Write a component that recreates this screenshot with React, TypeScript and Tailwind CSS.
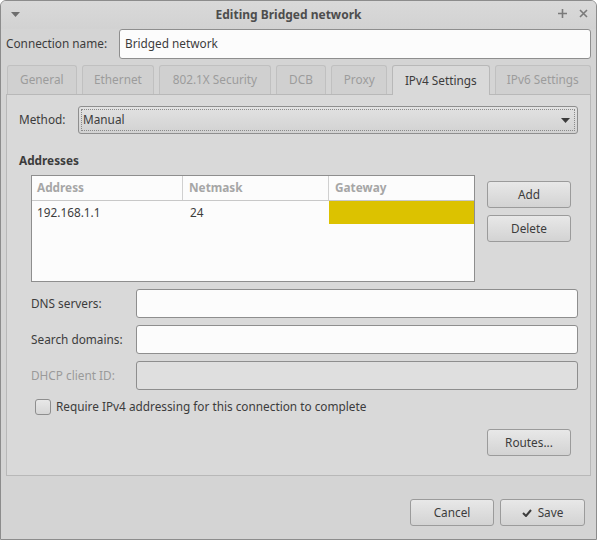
import React from 'react';

const Btn = ({ children, className = '' }: { children: React.ReactNode; className?: string }) => (
  <button
    className={`h-[27px] w-[84px] rounded-[3px] border border-[#9b9b9b] bg-gradient-to-b from-[#e8e8e8] to-[#d3d3d3] text-[#3c3c3c] flex items-center justify-center gap-[6px] ${className}`}
  >
    {children}
  </button>
);

const Field = ({ label, disabled = false }: { label: string; disabled?: boolean }) => (
  <div className="flex items-center h-[29px]">
    <span className={`w-[105px] ${disabled ? 'text-[#9a9a9a]' : ''}`}>{label}</span>
    <div
      className={`h-[29px] w-[442px] rounded-[3px] border border-[#8e8e8e] ${disabled ? 'bg-[#dfdfdf]' : 'bg-[#fcfcfc]'}`}
    />
  </div>
);

const tabs = [
  { name: 'General', w: 'w-[70px]' },
  { name: 'Ethernet', w: 'w-[73px]' },
  { name: '802.1X Security', w: 'w-[112px]' },
  { name: 'DCB', w: 'w-[51px]' },
  { name: 'Proxy', w: 'w-[56px]' },
  { name: 'IPv4 Settings', w: 'w-[98px]', active: true },
  { name: 'IPv6 Settings', w: 'w-[97px]' },
];

export default function App() {
  return (
    <div className="w-[597px] h-[540px] flex flex-col border border-[#8c8c8c] rounded-t-[6px] bg-[#d4d4d4] overflow-hidden font-['Noto_Sans',sans-serif] text-[11.8px] text-[#3c3c3c]">
      {/* title bar */}
      <header className="relative h-[28px] shrink-0 flex items-center justify-center pr-[20px] bg-gradient-to-b from-[#d9d9d9] to-[#d2d2d2]">
        <svg className="absolute left-[10px] top-[11px]" width="9" height="5" viewBox="0 0 9 5">
          <path d="M0 0h9L4.5 5z" fill="#6e6e6e" />
        </svg>
        <span className="font-bold text-[12px] text-[#4d4d4d]">Editing Bridged network</span>
        <div className="absolute right-[8px] top-[8px] flex items-center gap-[12px]">
          <svg width="9" height="9" viewBox="0 0 9 9">
            <path d="M4.5 0v9M0 4.5h9" stroke="#7a7a7a" strokeWidth="1.6" />
          </svg>
          <svg width="9" height="9" viewBox="0 0 9 9">
            <path d="M1 1l7 7M8 1L1 8" stroke="#7a7a7a" strokeWidth="1.6" />
          </svg>
        </div>
      </header>

      <div className="flex-1 flex flex-col px-[5px]">
        {/* connection name */}
        <div className="flex items-center h-[30px]">
          <span className="w-[113px]">Connection name:</span>
          <div className="flex-1 h-[30px] rounded-[3px] border border-[#8e8e8e] bg-[#fcfcfc] flex items-center px-[5px]">
            Bridged network
          </div>
        </div>

        {/* tabs */}
        <div className="flex gap-[5px] mt-[6px] pl-[1px] h-[29px] items-end">
          {tabs.map((t) => (
            <div
              key={t.name}
              className={`${t.w} flex items-center justify-center rounded-t-[3px] border border-b-0 ${
                t.active
                  ? 'h-[30px] -mb-[1px] bg-[#d9d9d9] border-[#b8b8b8] text-[#3c3c3c] z-10'
                  : 'h-[29px] bg-[#d0d0d0] border-[#c0c0c0] text-[#9c9c9c]'
              }`}
            >
              {t.name}
            </div>
          ))}
        </div>

        {/* page */}
        <div className="h-[382px] bg-[#d9d9d9] border border-[#b8b8b8] flex flex-col pl-[12px] pr-[12px] pt-[11px]">
          <div className="flex items-center h-[28px]">
            <span className="w-[59px]">Method:</span>
            <div className="flex-1 h-[28px] rounded-[3px] border border-[#8e8e8e] bg-gradient-to-b from-[#e2e2e2] to-[#d2d2d2] p-[2px]">
              <div className="h-full border border-dotted border-[#8a8a8a] flex items-center justify-between pl-[1px] pr-[4px]">
                <span>Manual</span>
                <svg width="9" height="5" viewBox="0 0 9 5">
                  <path d="M0 0h9L4.5 5z" fill="#3c3c3c" />
                </svg>
              </div>
            </div>
          </div>

          <div className="font-bold mt-[18px] h-[17px] leading-[17px]">Addresses</div>

          <div className="flex mt-[6px] ml-[12px] gap-[12px]">
            <div className="w-[444px] h-[107px] border border-[#8e8e8e] bg-[#fcfcfc]">
              <div className="flex h-[25px] border-b border-[#c8c8c8] font-bold text-[#a6a6a6]">
                <div className="w-[151px] border-r border-[#d0d0d0] pl-[5px] flex items-center">Address</div>
                <div className="w-[146px] border-r border-[#d0d0d0] pl-[6px] flex items-center">Netmask</div>
                <div className="flex-1 pl-[6px] flex items-center">Gateway</div>
              </div>
              <div className="flex h-[23px]">
                <div className="w-[151px] pl-[5px] flex items-center">192.168.1.1</div>
                <div className="w-[146px] pl-[7px] flex items-center">24</div>
                <div className="flex-1 bg-[#dcc200]" />
              </div>
            </div>
            <div className="flex flex-col gap-[7px] pt-[6px]">
              <Btn>Add</Btn>
              <Btn>Delete</Btn>
            </div>
          </div>

          <div className="flex flex-col gap-[7px] mt-[7px] ml-[12px]">
            <Field label="DNS servers:" />
            <Field label="Search domains:" />
            <Field label="DHCP client ID:" disabled />
          </div>

          <label className="flex items-center gap-[5px] mt-[8px] ml-[16px] h-[17px]">
            <span className="w-[16px] h-[16px] rounded-[3px] border border-[#8e8e8e] bg-gradient-to-b from-[#e8e8e8] to-[#d6d6d6]" />
            Require IPv4 addressing for this connection to complete
          </label>

          <div className="flex mt-[14px] ml-[468px]">
            <Btn>Routes...</Btn>
          </div>
        </div>

        {/* dialog buttons */}
        <div className="flex justify-end gap-[6px] mt-[23px] pr-[6px]">
          <Btn>Cancel</Btn>
          <Btn className="w-[85px]">
            <svg width="10" height="8" viewBox="0 0 10 8">
              <path d="M1 4l3 3 5-6" fill="none" stroke="#3c3c3c" strokeWidth="2" />
            </svg>
            Save
          </Btn>
        </div>
      </div>
    </div>
  );
}
